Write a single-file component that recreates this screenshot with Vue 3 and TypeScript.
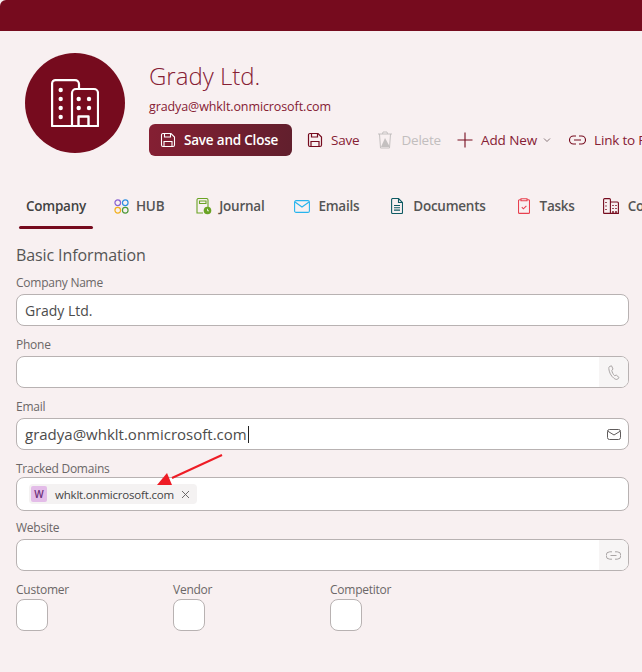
<script setup lang="ts">
const tabs = ['HUB', 'Journal', 'Emails', 'Documents', 'Tasks', 'Companies']
const checks = ['Customer', 'Vendor', 'Competitor']
</script>

<template>
  <div class="page">
    <div class="topbar"></div>

    <header class="head">
      <div class="avatar">
        <svg width="48" height="48" viewBox="0 0 48 48" fill="none" stroke="#fff" stroke-width="2.200" stroke-linejoin="round">
          <path d="M21 47H1.100V4.500a3.400 3.400 0 0 1 3.400-3.400H24a4 4 0 0 1 4 4V10" />
          <path d="M21 47V14a4 4 0 0 1 4-4h18a4 4 0 0 1 4 4v33z" />
          <path d="M27.500 47V37.500h10V47" stroke-width="2.400" />
          <g fill="#fff" stroke="none">
            <circle cx="9.700" cy="11" r="2.200" /><circle cx="9.700" cy="20" r="2.200" /><circle cx="9.700" cy="29" r="2.200" /><circle cx="9.700" cy="38" r="2.200" />
            <circle cx="27.700" cy="20" r="2.200" /><circle cx="38" cy="20" r="2.200" /><circle cx="27.700" cy="29" r="2.200" /><circle cx="38" cy="29" r="2.200" />
          </g>
        </svg>
      </div>
      <div class="head-main">
        <h1 class="name">Grady Ltd.</h1>
        <div class="mail">gradya@whklt.onmicrosoft.com</div>
        <div class="actions">
          <button class="primary">
            <svg width="16" height="16" viewBox="0 0 16 16" fill="none" stroke="#fff" stroke-width="1.100">
              <path d="M1.500 3a1.500 1.500 0 0 1 1.500-1.500h8l3.500 3.500v8a1.500 1.500 0 0 1-1.500 1.500H3A1.500 1.500 0 0 1 1.500 13z" />
              <path d="M4.500 1.500v3.500h6v-3.500M4 14.500v-5h8v5" />
            </svg>
            Save and Close
          </button>
          <span class="act save">
            <svg width="16" height="16" viewBox="0 0 16 16" fill="none" stroke="#760b1e" stroke-width="1.200">
              <path d="M1.500 3a1.500 1.500 0 0 1 1.500-1.500h8l3.500 3.500v8a1.500 1.500 0 0 1-1.500 1.500H3A1.500 1.500 0 0 1 1.500 13z" />
              <path d="M4.500 1.500v3.500h6v-3.500M4 14.500v-5h8v5" />
            </svg>
            Save
          </span>
          <span class="act del">
            <svg width="16" height="18" viewBox="0 0 16 18" fill="none" stroke="#c4c0c0" stroke-width="1">
              <path d="M1 3h14M5.500 3l.5-2h4l.5 2M2.500 3l1 14h9l1-14" />
              <path d="M8 7l5 9H4z" fill="#c4c0c0" stroke="none" />
            </svg>
            Delete
          </span>
          <span class="act add">
            <svg width="16" height="16" viewBox="0 0 16 16" fill="none" stroke="#760b1e" stroke-width="1.100"><path d="M8 .500v15M.500 8h15" /></svg>
            Add New
            <svg class="chev" width="8" height="8" viewBox="0 0 8 8" fill="none" stroke="#7c6a6d" stroke-width=".9"><path d="M1 2.500l3 3 3-3" /></svg>
          </span>
          <span class="act link">
            <svg width="17" height="10" viewBox="0 0 17 10" fill="none" stroke="#760b1e" stroke-width="1.100"><path d="M7 1H4.500a4 4 0 0 0 0 8H7M10 1h2.500a4 4 0 0 1 0 8H10M5 5h7" /></svg>
            Link to Parent
          </span>
        </div>
      </div>
    </header>

    <nav class="tabs">
      <span class="tab active">Company</span>
      <span v-for="t in tabs" :key="t" class="tab" :class="'t-' + t.toLowerCase()">
        <svg v-if="t === 'HUB'" width="15" height="15" viewBox="0 0 16 16" fill="none" stroke-width="1.300">
          <circle cx="4" cy="4" r="3" stroke="#8a63d2" /><circle cx="12" cy="4" r="3" stroke="#2f8fe0" />
          <circle cx="4" cy="12" r="3" stroke="#f2b01e" /><circle cx="12" cy="12" r="3" stroke="#4f9a3a" />
        </svg>
        <svg v-else-if="t === 'Journal'" width="16" height="17" viewBox="0 0 16 17" fill="none" stroke="#6aa324" stroke-width="1.100">
          <path d="M1 15.500V2a1.500 1.500 0 0 1 1.500-1.500h8A1.500 1.500 0 0 1 12 2v7M1 15h6M3.500 3h6.500v2.500H3.500z" />
          <circle cx="11.500" cy="12.500" r="3.800" fill="#6aa324" stroke="none" />
          <path d="M11.500 10.800v2h1.500" stroke="#fff" stroke-width=".8" />
        </svg>
        <svg v-else-if="t === 'Emails'" width="16" height="13" viewBox="0 0 16 13" fill="none" stroke="#27b4ee" stroke-width="1.100">
          <rect x=".6" y=".6" width="14.800" height="11.800" rx="1.500" /><path d="M1 2l7 5 7-5" />
        </svg>
        <svg v-else-if="t === 'Documents'" width="12" height="16" viewBox="0 0 12 16" fill="none" stroke="#0f5a63" stroke-width="1.100">
          <path d="M.6 1.500a1 1 0 0 1 1-1H7.500l4 4V14.500a1 1 0 0 1-1 1H1.600a1 1 0 0 1-1-1zM7.500.5v4h4M3 7.500h6M3 9.800h6M3 12.100h6" />
        </svg>
        <svg v-else-if="t === 'Tasks'" width="12" height="16" viewBox="0 0 12 16" fill="none" stroke="#e8404f" stroke-width="1.100">
          <path d="M3 1.800H1.500a1 1 0 0 0-1 1v11.600a1 1 0 0 0 1 1h9a1 1 0 0 0 1-1V2.800a1 1 0 0 0-1-1H9M3 .8h6v2H3zM3.800 9.200l1.600 1.600 3-3" />
        </svg>
        <svg v-else width="16" height="16" viewBox="0 0 16 16" fill="none" stroke="#760b1e" stroke-width="1.100">
          <path d="M.6 15.400V1.600a1 1 0 0 1 1-1h4.800a1 1 0 0 1 1 1V4M.6 15.400h14.800V5a1 1 0 0 0-1-1H7.400v11.400" />
          <path d="M3 4v1M3 7.500v1M3 11v1M10 7v1M13 7v1M10 10v1M13 10v1M10 13v2M13 13v2" stroke-width="1.400" />
        </svg>
        {{ t }}
      </span>
    </nav>
    <div class="tab-line"></div>

    <section class="form">
      <h2 class="section">Basic Information</h2>

      <label class="lbl first">Company Name</label>
      <div class="input"><span class="val">Grady Ltd.</span></div>

      <label class="lbl">Phone</label>
      <div class="input">
        <span class="addon off">
          <svg width="12" height="15" viewBox="0 0 12 15" fill="none" stroke="#a9a5a5" stroke-width="1">
            <path d="M1.500 1.500L3.500.8 5 4 3.800 5.500c.3 1.800 1.400 4 2.800 5.200l1.700-.6L11 12.500l-1.400 1.700c-1 .6-2.500 0-3.800-1C3 11 1 7 .8 3.500c0-1 .2-1.600.7-2z" />
          </svg>
        </span>
      </div>

      <label class="lbl">Email</label>
      <div class="input">
        <span class="val big">gradya@whklt.onmicrosoft.com</span><i class="caret"></i>
        <span class="addon">
          <svg width="14" height="11" viewBox="0 0 14 11" fill="none" stroke="#5f5b5b" stroke-width="1">
            <rect x=".5" y=".5" width="13" height="10" rx="2" /><path d="M.8 2.200L7 6l6.200-3.800" />
          </svg>
        </span>
      </div>

      <label class="lbl tracked">Tracked Domains</label>
      <div class="input tall">
        <span class="chip">
          <span class="chip-w">W</span>
          <span class="chip-t">whklt.onmicrosoft.com</span>
          <svg width="9" height="9" viewBox="0 0 9 9" stroke="#5f5b5b" stroke-width=".9"><path d="M1 1l7 7M8 1L1 8" /></svg>
        </span>
      </div>

      <label class="lbl web">Website</label>
      <div class="input">
        <span class="addon off">
          <svg width="15" height="9" viewBox="0 0 15 9" fill="none" stroke="#a9a5a5" stroke-width="1"><path d="M6 .8H3.800a3.700 3.700 0 0 0 0 7.400H6M9 .8h2.200a3.700 3.700 0 0 1 0 7.400H9M4.500 4.500h6" /></svg>
        </span>
      </div>

      <div class="checks">
        <div v-for="c in checks" :key="c" class="check">
          <div class="lbl-c">{{ c }}</div>
          <div class="box"></div>
        </div>
      </div>
    </section>

    <svg class="arrow" width="80" height="40" viewBox="0 0 80 40">
      <path d="M72 5L22 28" stroke="#ee1c25" stroke-width="2" fill="none" />
      <path d="M7 35L22 35 17 23z" fill="#ee1c25" />
    </svg>
  </div>
</template>

<style>
html, body { margin: 0; background: #f8f0f1; }
</style>

<style scoped>
.page {
  position: relative;
  width: 642px;
  height: 672px;
  overflow: hidden;
  background: #f8f0f1;
  font-family: "Open Sans", "Noto Sans", sans-serif;
  color: #424242;
}
.topbar { height: 31px; background: #760b1e; border-top-left-radius: 6px; }
.head { display: flex; gap: 24px; padding: 22px 0 0 25px; white-space: nowrap; }
.avatar {
  width: 100px; height: 100px; border-radius: 50%; background: #760b1e; flex: none;
  display: flex; align-items: center; justify-content: center;
}
.head-main { min-width: 0; }
.name { margin: 7px 0 0; font-size: 24px; line-height: 32px; font-weight: 300; color: #862034; }
.mail { font-size: 12.500px; line-height: 18px; margin-top: 6px; color: #862034; letter-spacing: -.1px; }
.actions { display: flex; align-items: center; margin-top: 8px; height: 32px; font-size: 13.500px; }
.primary {
  display: flex; align-items: center; gap: 8px; flex: none; width: 143px; height: 32px; padding: 0 0 0 11px; border: 0;
  border-radius: 6px; background: linear-gradient(100deg, #851f33, #611f2d); color: #fff;
  font: 600 13.500px "Open Sans", sans-serif; letter-spacing: -.2px; white-space: nowrap;
}
.act { display: flex; align-items: center; gap: 8px; flex: none; color: #862034; letter-spacing: -.2px; }
.save { margin-left: 15px; }
.del { margin-left: 18px; color: #c2bebe; }
.add { margin-left: 16px; letter-spacing: -.1px; }
.chev { margin-left: -2px; }
.link { margin-left: 18px; }
.tabs { display: flex; align-items: center; margin-top: 40px; height: 20px; font-size: 13.500px; font-weight: 600; white-space: nowrap; letter-spacing: -.25px; color: #555; }
.tab { display: flex; align-items: center; gap: 8px; flex: none; }
.active { margin-left: 26px; color: #424242; }
.t-hub { margin-left: 28px; gap: 7px; }
.t-journal { margin-left: 32px; gap: 7px; }
.t-emails { margin-left: 30px; }
.t-documents { margin-left: 32px; gap: 10px; }
.t-tasks { margin-left: 32px; gap: 10px; }
.t-companies { margin-left: 28px; gap: 9px; }
.tab-line { width: 74px; height: 3px; border-radius: 2px; margin: 10px 0 0 19px; background: #760b1e; }
.form { padding: 0 13px 0 16px; }
.section { margin: 14px 0 0; font-size: 16px; line-height: 24px; font-weight: 400; color: #555; letter-spacing: -.1px; }
.lbl { display: block; margin: 11px 0 3px; font-size: 12px; line-height: 16px; color: #6b6767; letter-spacing: -.25px; }
.first { margin-top: 8px; }
.tracked { margin-bottom: 0; }
.web { margin-top: 9px; }
.input {
  position: relative; display: flex; align-items: center; box-sizing: border-box; height: 32px; padding-left: 8px;
  background: #fff; border: 1px solid #b8b2b2; border-radius: 8px; overflow: hidden;
}
.tall { height: 34px; padding-left: 12px; }
.val { font-size: 14px; color: #4c4c4c; }
.val.big { font-size: 15px; letter-spacing: 0; }
.caret { width: 1px; height: 17px; background: #222; margin-left: 1px; }
.addon {
  position: absolute; right: 0; top: 0; bottom: 0; width: 29px; display: flex; align-items: center; justify-content: center;
}
.addon.off { background: #f7f5f5; }
.chip {
  display: flex; align-items: center; height: 20px; padding: 0 7px 0 2px; margin-left: 0; gap: 8px; border-radius: 4px; background: #f4f2f2;
}
.chip-w {
  width: 16px; height: 16px; border-radius: 2px; background: #e3bce8; color: #6c2f78; display: flex; align-items: center; justify-content: center;
  font-size: 10px; font-weight: 600;
}
.chip-t { font-size: 11.500px; color: #444; letter-spacing: -.2px; margin-right: -1px; }
.checks { display: flex; margin-top: 11px; }
.check { width: 157px; }
.lbl-c { font-size: 12px; line-height: 16px; color: #6b6767; letter-spacing: -.25px; margin-bottom: 1px; }
.box { box-sizing: border-box; width: 32px; height: 32px; background: #fff; border: 1px solid #b8b2b2; border-radius: 8px; }
.arrow { position: absolute; left: 150px; top: 450px; }
</style>
